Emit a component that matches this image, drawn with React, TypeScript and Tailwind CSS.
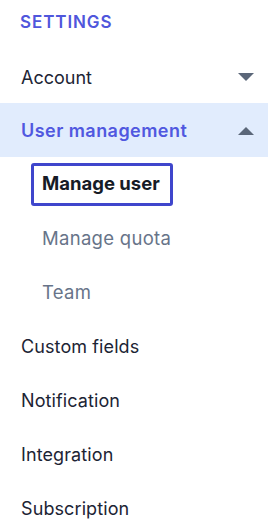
import React from "react";

// Triângulo usado como seta de expansão do menu
function Seta({ up }: { up?: boolean }) {
  return (
    <svg width="16" height="8" viewBox="0 0 16 8" className="shrink-0">
      {up ? <polygon points="0,8 16,8 8,0" fill="#5b6779" /> : <polygon points="0,0 16,0 8,8" fill="#5b6779" />}
    </svg>
  );
}

const itensFinais = ["Custom fields", "Notification", "Integration", "Subscription"];

export default function App() {
  return (
    <div className="w-[268px] h-[531px] overflow-hidden bg-white" style={{ fontFamily: "Inter, 'Noto Sans', sans-serif" }}>
      {/* Título */}
      <div className="h-[49px] pl-[20px] pt-[10px]">
        <span className="text-[17px] leading-6 font-semibold text-[#4f56dc] tracking-[0.9px]">SETTINGS</span>
      </div>

      {/* Account */}
      <div className="h-[54px] flex items-center justify-between pl-[21px] pr-[14px] pt-[2px]">
        <span className="text-[18px] text-[#1c2434]">Account</span>
        <Seta />
      </div>

      {/* User management (aberto) */}
      <div className="h-[54px] flex items-center justify-between pl-[21px] pr-[14px] pt-[1px] bg-[#e1ecfd]">
        <span className="text-[18px] font-semibold text-[#5058e0] tracking-[0.45px]">User management</span>
        <Seta up />
      </div>

      {/* Sub-itens */}
      <div className="h-[54px] flex items-center pl-[31px]">
        <div className="h-[43px] flex items-center border-[3px] border-[#3f46cc] rounded-[3px] pl-[8px] pr-[10px]">
          <span className="text-[18.5px] font-bold text-[#161b26]">Manage user</span>
        </div>
      </div>
      <div className="h-[54px] flex items-center pl-[42px] pt-[1px]">
        <span className="text-[18.5px] text-[#677489] tracking-[0.3px]">Manage quota</span>
      </div>
      <div className="h-[54px] flex items-center pl-[42px] pt-[1px]">
        <span className="text-[18.5px] text-[#677489] tracking-[0.3px]">Team</span>
      </div>

      {/* Demais itens */}
      {itensFinais.map((item) => (
        <div key={item} className="h-[54px] flex items-center pl-[21px] pt-[1px]">
          <span className="text-[18px] text-[#1c2434] tracking-[0.1px]">{item}</span>
        </div>
      ))}
    </div>
  );
}
